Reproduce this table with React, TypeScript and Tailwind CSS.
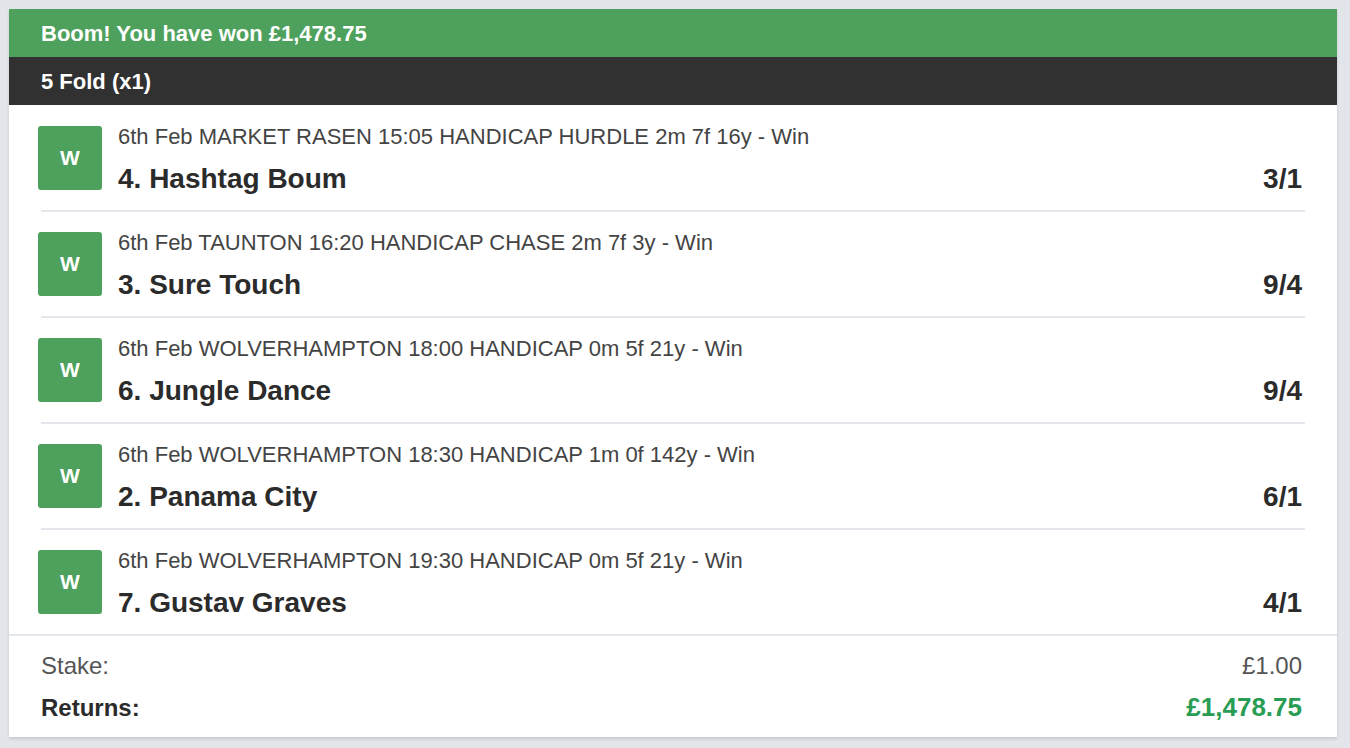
const legs = [
  { info: '6th Feb MARKET RASEN 15:05 HANDICAP HURDLE 2m 7f 16y - Win', name: '4. Hashtag Boum', odds: '3/1' },
  { info: '6th Feb TAUNTON 16:20 HANDICAP CHASE 2m 7f 3y - Win', name: '3. Sure Touch', odds: '9/4' },
  { info: '6th Feb WOLVERHAMPTON 18:00 HANDICAP 0m 5f 21y - Win', name: '6. Jungle Dance', odds: '9/4' },
  { info: '6th Feb WOLVERHAMPTON 18:30 HANDICAP 1m 0f 142y - Win', name: '2. Panama City', odds: '6/1' },
  { info: '6th Feb WOLVERHAMPTON 19:30 HANDICAP 0m 5f 21y - Win', name: '7. Gustav Graves', odds: '4/1' },
];

export default function App() {
  return (
    <div className="min-h-screen bg-[#e2e5e9] pt-[9px] pl-[9px] pr-[13px] font-['Liberation_Sans',Arial,sans-serif]">
      <div className="bg-white shadow-[0_2px_3px_rgba(0,0,0,0.12)]">
        {/* Win banner */}
        <div className="h-[48px] bg-[#4ea15d] flex items-center px-8 text-white font-bold text-[22px]">
          Boom! You have won £1,478.75
        </div>
        <div className="h-[48px] bg-[#313131] flex items-center px-8 text-white font-bold text-[22px]">
          5 Fold (x1)
        </div>

        {/* Legs */}
        <div className="border-b-2 border-[#e3e6ea]">
          {legs.map((leg, idx) => (
            <div key={idx} className={idx < legs.length - 1 ? 'mx-8 border-b-2 border-[#e3e6ea]' : 'mx-8'}>
              <div className={idx === 0 ? 'flex items-start h-[105px] pt-[19px] -ml-[3px] pr-[3px]' : 'flex items-start h-[104px] pt-[18px] -ml-[3px] pr-[3px]'}>
                <div className="mt-[2px] w-16 h-16 rounded-[3px] bg-[#4ea15d] flex items-center justify-center text-white font-bold text-[21px] shrink-0">
                  W
                </div>
                <div className="ml-4 flex-1 flex flex-col gap-[13px]">
                  <div className="text-[22px] leading-[26px] text-[#444]">{leg.info}</div>
                  <div className="flex items-baseline justify-between">
                    <span className="text-[28px] leading-[32px] font-bold text-[#2b2b2b]">{leg.name}</span>
                    <span className="text-[28px] leading-[32px] font-bold text-[#2b2b2b]">{leg.odds}</span>
                  </div>
                </div>
              </div>
            </div>
          ))}
        </div>

        {/* Totals */}
        <div className="pl-8 pr-[35px] pt-[16px] pb-[15px] flex flex-col gap-[13px]">
          <div className="flex justify-between text-[24px] leading-[28px] text-[#555]">
            <span>Stake:</span>
            <span>£1.00</span>
          </div>
          <div className="flex justify-between items-baseline leading-[28px] font-bold">
            <span className="text-[24px] text-[#2b2b2b]">Returns:</span>
            <span className="text-[26px] text-[#2a9d54]">£1,478.75</span>
          </div>
        </div>
      </div>
    </div>
  );
}
